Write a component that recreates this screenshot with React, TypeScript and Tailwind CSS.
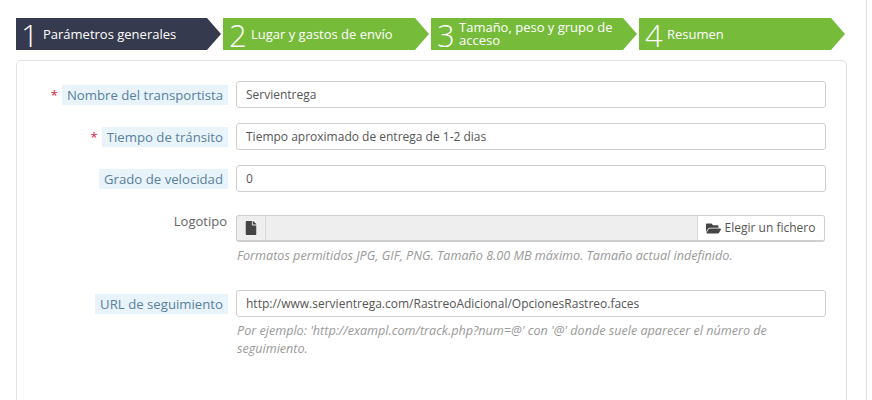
import { FaFile, FaFolderOpen } from "react-icons/fa";

const STEPS = [
  { n: "1", label: "Parámetros generales", active: true },
  { n: "2", label: "Lugar y gastos de envío" },
  { n: "3", label: "Tamaño, peso y grupo de acceso" },
  { n: "4", label: "Resumen" },
];

function Hint({ text }: { text: string }) {
  return <span className="bg-[#e8f3fa] text-[#5a7f9c] text-[13.2px] px-[5px] py-px leading-[18px]">{text}</span>;
}

function Field({ label, value, required }: { label: string; value: string; required?: boolean }) {
  return (
    <div className="flex items-center h-[27px]">
      <div className="w-[211px] shrink-0 text-right pt-[2px]">
        {required && <span className="text-[#e0203c] mr-[4px]">*</span>}
        <Hint text={label} />
      </div>
      <div className="ml-[8px] w-[590px] h-[27px] flex items-center pl-[9px] pr-2 pt-px border border-[#cfcfcf] rounded-[3px] bg-white text-[12px] text-[#555]">
        {value}
      </div>
    </div>
  );
}

export default function App() {
  return (
    <div className="w-[872px] h-[400px] overflow-hidden bg-white font-['Open_Sans',sans-serif] text-[13px] text-[#666] flex">
      <div className="w-[867px] shrink-0 border-r border-[#e0e0e0] pl-4 pt-[18px]">
        <div className="flex gap-[2px] h-8 w-[829px]">
          {STEPS.map((s) => (
            <div
              key={s.n}
              className={`w-[206px] first:w-[205px] h-8 flex items-center pl-[6px] first:pl-[5px] pr-5 text-white [clip-path:polygon(0_0,calc(100%-14px)_0,100%_50%,calc(100%-14px)_100%,0_100%)] ${s.active ? "bg-[#363a4e]" : "bg-[#76bb3a]"}`}
            >
              <span className="text-[31px] leading-8 font-light w-[22px] shrink-0 pt-[2px]">{s.n}</span>
              <span className="text-[13px] leading-[13px]">{s.label}</span>
            </div>
          ))}
        </div>
        <div className="mt-[10px] w-[831px] h-[400px] border border-[#e3e0e0] rounded-[5px] pt-5">
          <div className="flex flex-col">
            <Field required label="Nombre del transportista" value="Servientrega" />
            <div className="h-[15px]" />
            <Field required label="Tiempo de tránsito" value="Tiempo aproximado de entrega de 1-2 dias" />
            <div className="h-[15px]" />
            <Field label="Grado de velocidad" value="0" />
            <div className="h-[23px]" />
            <div className="flex">
              <div className="w-[211px] shrink-0 text-right leading-[12px] pr-[1px]">Logotipo</div>
              <div className="ml-[8px] w-[589px]">
                <div className="h-[27px] flex border border-[#cfcfcf] border-b-2 rounded-[3px] bg-[#eeeeee] overflow-hidden">
                  <div className="w-[29px] flex items-center justify-center border-r border-[#d8d8d8] text-[#444]">
                    <FaFile size={14} />
                  </div>
                  <div className="flex-1" />
                  <div className="w-[127px] bg-white border-l border-[#d8d8d8] flex items-center justify-center gap-[4px] pr-px text-[12px] text-[#555]">
                    <FaFolderOpen size={15} className="text-[#444]" />
                    Elegir un fichero
                  </div>
                </div>
                <p className="mt-[5px] pl-px text-[12.6px] leading-[18px] italic text-[#999]">
                  Formatos permitidos JPG, GIF, PNG. Tamaño 8.00 MB máximo. Tamaño actual indefinido.
                </p>
              </div>
            </div>
            <div className="h-[25px]" />
            <Field label="URL de seguimiento" value="http://www.servientrega.com/RastreoAdicional/OpcionesRastreo.faces" />
            <div className="ml-[220px] w-[570px] mt-[5px] text-[12.6px] leading-[18px] italic text-[#999]">
              Por ejemplo: 'http://exampl.com/track.php?num=@' con '@' donde suele aparecer el número de seguimiento.
            </div>
          </div>
        </div>
      </div>
    </div>
  );
}
